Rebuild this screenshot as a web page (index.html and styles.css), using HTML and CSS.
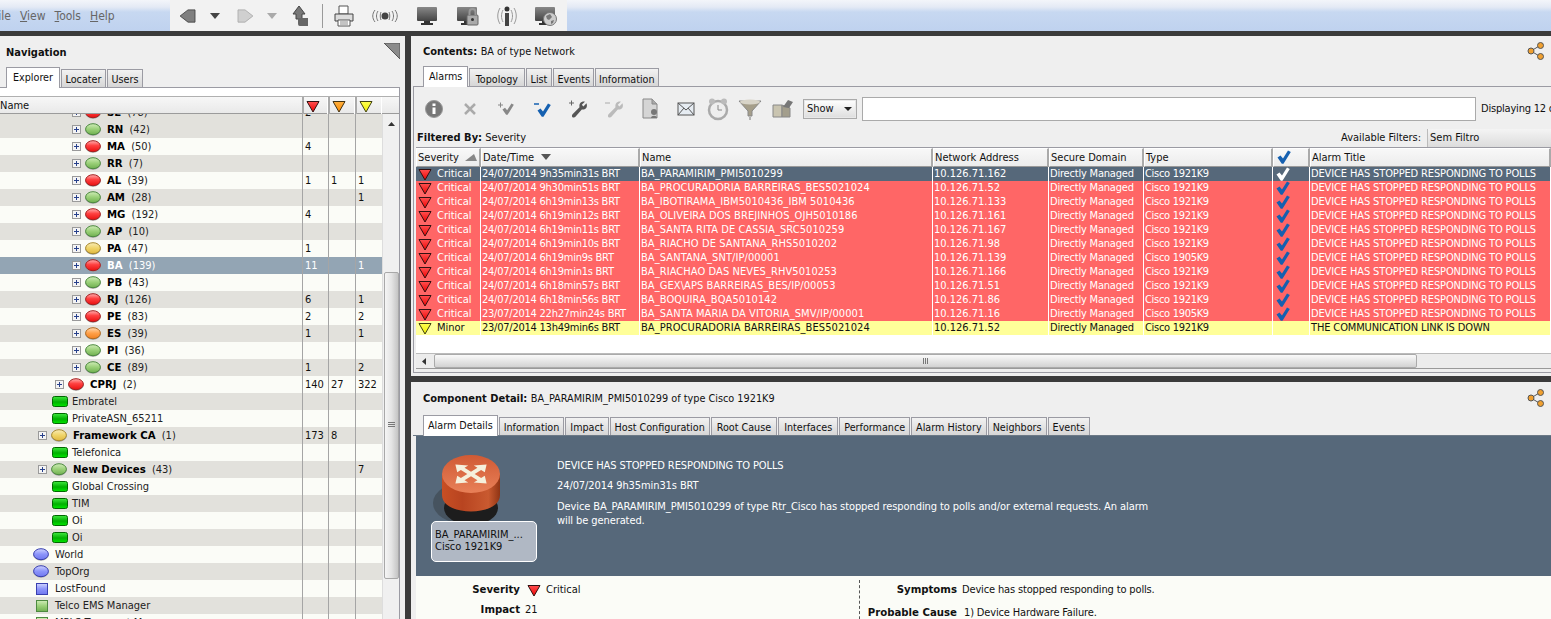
FILE: index.html
```html
<!DOCTYPE html>
<html lang="en">
<head>
<meta charset="utf-8">
<title>Network Console</title>
<link rel="stylesheet" href="styles.css">
</head>
<body>
<svg class="defs" width="0" height="0" aria-hidden="true">
  <defs>
    <linearGradient id="gRed" x1="0" y1="0" x2="0" y2="1"><stop offset="0" stop-color="#ffb0b0"/><stop offset=".45" stop-color="#ff4040"/><stop offset="1" stop-color="#e81010"/></linearGradient>
    <linearGradient id="gGreen" x1="0" y1="0" x2="0" y2="1"><stop offset="0" stop-color="#d0ecb8"/><stop offset=".5" stop-color="#9ad078"/><stop offset="1" stop-color="#70b050"/></linearGradient>
    <linearGradient id="gYellow" x1="0" y1="0" x2="0" y2="1"><stop offset="0" stop-color="#f8ecb8"/><stop offset=".5" stop-color="#f0d468"/><stop offset="1" stop-color="#e0b840"/></linearGradient>
    <linearGradient id="gOrange" x1="0" y1="0" x2="0" y2="1"><stop offset="0" stop-color="#ffd8b0"/><stop offset=".5" stop-color="#ffa048"/><stop offset="1" stop-color="#f08020"/></linearGradient>
    <linearGradient id="gBlue" x1="0" y1="0" x2="0" y2="1"><stop offset="0" stop-color="#d0d4ff"/><stop offset=".5" stop-color="#8c94fa"/><stop offset="1" stop-color="#7078f0"/></linearGradient>
    <linearGradient id="gRect" x1="0" y1="0" x2="0" y2="1"><stop offset="0" stop-color="#40e840"/><stop offset=".55" stop-color="#00b000"/><stop offset="1" stop-color="#00e800"/></linearGradient>
    <linearGradient id="gTriRed" x1="0" y1="0" x2="0" y2="1"><stop offset="0" stop-color="#ff5050"/><stop offset="1" stop-color="#f00000"/></linearGradient>
    <linearGradient id="gTriOr" x1="0" y1="0" x2="0" y2="1"><stop offset="0" stop-color="#ffb040"/><stop offset="1" stop-color="#ff8c00"/></linearGradient>
    <linearGradient id="gTriYe" x1="0" y1="0" x2="0" y2="1"><stop offset="0" stop-color="#ffff50"/><stop offset="1" stop-color="#f0f000"/></linearGradient>
    <linearGradient id="gBody" x1="0" y1="0" x2="1" y2="0"><stop offset="0" stop-color="#c84f24"/><stop offset=".35" stop-color="#b84420"/><stop offset=".8" stop-color="#c95a30"/><stop offset="1" stop-color="#8f3414"/></linearGradient>
    <linearGradient id="gTop" x1="0" y1="0" x2="0" y2="1"><stop offset="0" stop-color="#d05a34"/><stop offset="1" stop-color="#e88058"/></linearGradient>
    <linearGradient id="gMon" x1="0" y1="0" x2="0" y2="1"><stop offset="0" stop-color="#888"/><stop offset="1" stop-color="#444"/></linearGradient>
    <symbol id="ovRed" viewBox="0 0 16 13"><ellipse cx="8" cy="7.200" rx="7.600" ry="5.500" fill="#999"/><ellipse cx="8" cy="6.200" rx="7.400" ry="5.500" fill="url(#gRed)" stroke="#a52020"/></symbol>
    <symbol id="ovGreen" viewBox="0 0 16 13"><ellipse cx="8" cy="7.200" rx="7.600" ry="5.500" fill="#999"/><ellipse cx="8" cy="6.200" rx="7.400" ry="5.500" fill="url(#gGreen)" stroke="#4d8a40"/></symbol>
    <symbol id="ovYellow" viewBox="0 0 16 13"><ellipse cx="8" cy="7.200" rx="7.600" ry="5.500" fill="#999"/><ellipse cx="8" cy="6.200" rx="7.400" ry="5.500" fill="url(#gYellow)" stroke="#a88a30"/></symbol>
    <symbol id="ovOrange" viewBox="0 0 16 13"><ellipse cx="8" cy="7.200" rx="7.600" ry="5.500" fill="#999"/><ellipse cx="8" cy="6.200" rx="7.400" ry="5.500" fill="url(#gOrange)" stroke="#b06a20"/></symbol>
    <symbol id="ovBlue" viewBox="0 0 16 13"><ellipse cx="8" cy="7.200" rx="7.600" ry="5.500" fill="#aaa"/><ellipse cx="8" cy="6.200" rx="7.400" ry="5.500" fill="url(#gBlue)" stroke="#3a40b0"/></symbol>
    <symbol id="rcGreen" viewBox="0 0 16 11"><rect x=".5" y=".5" width="15" height="10" rx="2" fill="url(#gRect)" stroke="#006800"/></symbol>
    <symbol id="sqBlue" viewBox="0 0 12 12"><rect x=".5" y=".5" width="11" height="11" fill="url(#gBlue)" stroke="#3a40b0"/></symbol>
    <symbol id="sqGreen" viewBox="0 0 12 12"><rect x=".5" y=".5" width="11" height="11" fill="url(#gGreen)" stroke="#4d8a40"/></symbol>
    <symbol id="triRed" viewBox="0 0 14 13"><path d="M1 1.500H13L7 12Z" fill="url(#gTriRed)" stroke="#301010" stroke-linejoin="round"/></symbol>
    <symbol id="triOr" viewBox="0 0 14 13"><path d="M1 1.500H13L7 12Z" fill="url(#gTriOr)" stroke="#403010" stroke-linejoin="round"/></symbol>
    <symbol id="triYe" viewBox="0 0 14 13"><path d="M1 1.500H13L7 12Z" fill="url(#gTriYe)" stroke="#404010" stroke-linejoin="round"/></symbol>
    <symbol id="tick" viewBox="0 0 14 14"><path d="M0.500 7.500L3.500 5.500 6 8.500 11 0.500 13.800 2 6.500 13.800H4.800Z" fill="currentColor"/></symbol>
    <symbol id="plus" viewBox="0 0 9 9"><rect x=".5" y=".5" width="8" height="8" fill="#f4f4f4" stroke="#9a9a9a"/><path d="M2 4.500H7M4.500 2V7" stroke="#27408b"/></symbol>
    <symbol id="share" viewBox="0 0 18 18"><path d="M4 9L13 3.500M4 9L13 14.500" stroke="#555" fill="none"/><circle cx="4" cy="9" r="3" fill="#f0a030" stroke="#555"/><circle cx="13.500" cy="3.500" r="3" fill="#f0a030" stroke="#555"/><circle cx="13.500" cy="14.500" r="3" fill="#f0a030" stroke="#555"/></symbol>
    <symbol id="wrench" viewBox="0 0 22 22"><path d="M20 3L16 7 14 5 18 1C14 0 10 3 11 8L2 17C1 18 1 20 2 21 3 22 5 21 6 20L14 11C19 12 22 8 20 3Z" fill="currentColor"/></symbol>
    <symbol id="mon" viewBox="0 0 24 22"><rect x="2" y="2" width="20" height="14" rx="1" fill="url(#gMon)"/><path d="M9 16H15V18H18V20H6V18H9Z" fill="#333"/></symbol>
  </defs>
</svg>

<header class="topbar">
  <nav class="menu">
    <span class="menu-file">File</span>
    <span><u>V</u>iew</span>
    <span><u>T</u>ools</span>
    <span><u>H</u>elp</span>
  </nav>
  <div class="apptools">
    <svg class="ti" viewBox="0 0 20 16"><path d="M1 8L10 1H18V15H10Z" fill="#7f7f7f" stroke="#444"/></svg>
    <svg class="dd" viewBox="0 0 10 6"><path d="M0 0H10L5 6Z" fill="#444"/></svg>
    <svg class="ti" viewBox="0 0 20 16"><path d="M19 8L10 1H2V15H10Z" fill="#d0d0d0" stroke="#aaa"/></svg>
    <svg class="dd" viewBox="0 0 10 6"><path d="M0 0H10L5 6Z" fill="#aaa"/></svg>
    <svg class="ti tall" viewBox="0 0 18 22"><path d="M8 1L14 9H11V14H5V9H2Z" fill="#777" stroke="#444"/><path d="M7 13H17V21H9C7 21 7 19 7 18Z" fill="#666"/></svg>
    <i class="sep"></i>
    <svg class="ti tall" viewBox="0 0 20 22"><path d="M5 1H14V9H5Z" fill="#fff" stroke="#555"/><path d="M1 9H19V16H1Z" fill="#ddd" stroke="#444"/><path d="M4 15H16V21H4Z" fill="#fff" stroke="#555"/><path d="M6 17H14M6 19H14" stroke="#888"/></svg>
    <svg class="wide" viewBox="0 0 30 16"><g fill="none" stroke="#777"><path d="M5 2C2 6 2 10 5 14M8 3C6 6 6 10 8 13M11 4C10 6 10 10 11 12M25 2C28 6 28 10 25 14M22 3C24 6 24 10 22 13M19 4C20 6 20 10 19 12"/></g><circle cx="15" cy="8" r="3.500" fill="#444"/></svg>
    <svg class="ti big" viewBox="0 0 24 22"><use href="#mon"/></svg>
    <svg class="ti big" viewBox="0 0 24 22"><use href="#mon"/><rect x="12" y="10" width="11" height="10" rx="1" fill="#aaa" stroke="#666"/><path d="M14.500 10V7C14.500 3 20.500 3 20.500 7V10" fill="none" stroke="#999" stroke-width="2"/><circle cx="17.500" cy="14.500" r="1.500" fill="#333"/></svg>
    <svg class="ti big" viewBox="0 0 24 22"><g fill="none" stroke="#999"><path d="M5 3C2 8 2 14 5 19M8 5C6 9 6 13 8 17M19 3C22 8 22 14 19 19M16 5C18 9 18 13 16 17"/></g><circle cx="12" cy="4" r="2.500" fill="#333"/><path d="M10 8H14V21H10Z" fill="#444"/></svg>
    <svg class="ti big" viewBox="0 0 24 22"><use href="#mon"/><circle cx="17" cy="14" r="6.500" fill="#ccc" stroke="#777"/><path d="M13 11L17 9 19 12 16 15 14 14ZM18 16L21 15 20 18 18 19Z" fill="#777"/></svg>
  </div>
  <div class="menu-rest"></div>
</header>

<main class="workspace">
  <section class="nav-panel">
    <div class="panel-head">
      <h2 class="panel-title">Navigation</h2>
      <svg class="collapse" viewBox="0 0 16 16"><path d="M0 0H16V16Z" fill="#8b8b8b" stroke="#555"/></svg>
    </div>
    <div class="tabs nav-tabs">
      <span class="tab active tab-explorer">Explorer</span>
      <span class="tab tab-locater">Locater</span>
      <span class="tab tab-users">Users</span>
    </div>
    <div class="nav-body">
      <div class="tree-head">
        <div class="th-name">Name</div>
        <div class="th-sev"><svg class="tri"><use href="#triRed"/></svg></div>
        <div class="th-sev"><svg class="tri"><use href="#triOr"/></svg></div>
        <div class="th-sev"><svg class="tri"><use href="#triYe"/></svg></div>
      </div>
      <div class="tree-wrap">
        <div class="tree">
          <div class="row first even"><div class="nm l3"><svg class="pl"><use href="#plus"/></svg><svg class="ov"><use href="#ovRed"/></svg><b>SE</b> (78)</div><div class="n">2</div><div class="n"></div><div class="n"></div></div>
          <div class="row even"><div class="nm l3"><svg class="pl"><use href="#plus"/></svg><svg class="ov"><use href="#ovGreen"/></svg><b>RN</b> (42)</div><div class="n"></div><div class="n"></div><div class="n"></div></div>
          <div class="row"><div class="nm l3"><svg class="pl"><use href="#plus"/></svg><svg class="ov"><use href="#ovRed"/></svg><b>MA</b> (50)</div><div class="n">4</div><div class="n"></div><div class="n"></div></div>
          <div class="row even"><div class="nm l3"><svg class="pl"><use href="#plus"/></svg><svg class="ov"><use href="#ovGreen"/></svg><b>RR</b> (7)</div><div class="n"></div><div class="n"></div><div class="n"></div></div>
          <div class="row"><div class="nm l3"><svg class="pl"><use href="#plus"/></svg><svg class="ov"><use href="#ovRed"/></svg><b>AL</b> (39)</div><div class="n">1</div><div class="n">1</div><div class="n">1</div></div>
          <div class="row even"><div class="nm l3"><svg class="pl"><use href="#plus"/></svg><svg class="ov"><use href="#ovGreen"/></svg><b>AM</b> (28)</div><div class="n"></div><div class="n"></div><div class="n">1</div></div>
          <div class="row"><div class="nm l3"><svg class="pl"><use href="#plus"/></svg><svg class="ov"><use href="#ovRed"/></svg><b>MG</b> (192)</div><div class="n">4</div><div class="n"></div><div class="n"></div></div>
          <div class="row even"><div class="nm l3"><svg class="pl"><use href="#plus"/></svg><svg class="ov"><use href="#ovGreen"/></svg><b>AP</b> (10)</div><div class="n"></div><div class="n"></div><div class="n"></div></div>
          <div class="row"><div class="nm l3"><svg class="pl"><use href="#plus"/></svg><svg class="ov"><use href="#ovYellow"/></svg><b>PA</b> (47)</div><div class="n">1</div><div class="n"></div><div class="n"></div></div>
          <div class="row sel"><div class="nm l3"><svg class="pl"><use href="#plus"/></svg><svg class="ov"><use href="#ovRed"/></svg><b>BA</b> (139)</div><div class="n">11</div><div class="n"></div><div class="n">1</div></div>
          <div class="row"><div class="nm l3"><svg class="pl"><use href="#plus"/></svg><svg class="ov"><use href="#ovGreen"/></svg><b>PB</b> (43)</div><div class="n"></div><div class="n"></div><div class="n"></div></div>
          <div class="row even"><div class="nm l3"><svg class="pl"><use href="#plus"/></svg><svg class="ov"><use href="#ovRed"/></svg><b>RJ</b> (126)</div><div class="n">6</div><div class="n"></div><div class="n">1</div></div>
          <div class="row"><div class="nm l3"><svg class="pl"><use href="#plus"/></svg><svg class="ov"><use href="#ovRed"/></svg><b>PE</b> (83)</div><div class="n">2</div><div class="n"></div><div class="n">2</div></div>
          <div class="row even"><div class="nm l3"><svg class="pl"><use href="#plus"/></svg><svg class="ov"><use href="#ovOrange"/></svg><b>ES</b> (39)</div><div class="n">1</div><div class="n"></div><div class="n">1</div></div>
          <div class="row"><div class="nm l3"><svg class="pl"><use href="#plus"/></svg><svg class="ov"><use href="#ovGreen"/></svg><b>PI</b> (36)</div><div class="n"></div><div class="n"></div><div class="n"></div></div>
          <div class="row even"><div class="nm l3"><svg class="pl"><use href="#plus"/></svg><svg class="ov"><use href="#ovGreen"/></svg><b>CE</b> (89)</div><div class="n">1</div><div class="n"></div><div class="n">2</div></div>
          <div class="row"><div class="nm l2"><svg class="pl"><use href="#plus"/></svg><svg class="ov"><use href="#ovRed"/></svg><b>CPRJ</b> (2)</div><div class="n">140</div><div class="n">27</div><div class="n">322</div></div>
          <div class="row even"><div class="nm l1b"><svg class="rc"><use href="#rcGreen"/></svg>Embratel</div><div class="n"></div><div class="n"></div><div class="n"></div></div>
          <div class="row"><div class="nm l1b"><svg class="rc"><use href="#rcGreen"/></svg>PrivateASN_65211</div><div class="n"></div><div class="n"></div><div class="n"></div></div>
          <div class="row even"><div class="nm l1"><svg class="pl"><use href="#plus"/></svg><svg class="ov"><use href="#ovYellow"/></svg><b>Framework CA</b> (1)</div><div class="n">173</div><div class="n">8</div><div class="n"></div></div>
          <div class="row"><div class="nm l1b"><svg class="rc"><use href="#rcGreen"/></svg>Telefonica</div><div class="n"></div><div class="n"></div><div class="n"></div></div>
          <div class="row even"><div class="nm l1"><svg class="pl"><use href="#plus"/></svg><svg class="ov"><use href="#ovGreen"/></svg><b>New Devices</b> (43)</div><div class="n"></div><div class="n"></div><div class="n">7</div></div>
          <div class="row"><div class="nm l1b"><svg class="rc"><use href="#rcGreen"/></svg>Global Crossing</div><div class="n"></div><div class="n"></div><div class="n"></div></div>
          <div class="row even"><div class="nm l1b"><svg class="rc"><use href="#rcGreen"/></svg>TIM</div><div class="n"></div><div class="n"></div><div class="n"></div></div>
          <div class="row"><div class="nm l1b"><svg class="rc"><use href="#rcGreen"/></svg>Oi</div><div class="n"></div><div class="n"></div><div class="n"></div></div>
          <div class="row even"><div class="nm l1b"><svg class="rc"><use href="#rcGreen"/></svg>Oi</div><div class="n"></div><div class="n"></div><div class="n"></div></div>
          <div class="row"><div class="nm l0"><svg class="ov"><use href="#ovBlue"/></svg>World</div><div class="n"></div><div class="n"></div><div class="n"></div></div>
          <div class="row even"><div class="nm l0"><svg class="ov"><use href="#ovBlue"/></svg>TopOrg</div><div class="n"></div><div class="n"></div><div class="n"></div></div>
          <div class="row"><div class="nm l0s"><svg class="sq"><use href="#sqBlue"/></svg>LostFound</div><div class="n"></div><div class="n"></div><div class="n"></div></div>
          <div class="row even"><div class="nm l0s"><svg class="sq"><use href="#sqGreen"/></svg>Telco EMS Manager</div><div class="n"></div><div class="n"></div><div class="n"></div></div>
          <div class="row"><div class="nm l0s"><svg class="sq"><use href="#sqGreen"/></svg>MPLS Transport M</div><div class="n"></div><div class="n"></div><div class="n"></div></div>
        </div>
        <div class="vscroll">
          <svg class="arrow-up" viewBox="0 0 7 4"><path d="M0 4L3.500 0 7 4Z" fill="#333"/></svg>
          <div class="vthumb"><i></i><i></i><i></i></div>
        </div>
      </div>
    </div>
  </section>

  <div class="right-col">
    <section class="contents">
      <div class="panel-head right-head">
        <h2 class="panel-title"><span class="pt-b">Contents:</span> <span class="pt-n">BA of type Network</span></h2>
        <svg class="share"><use href="#share"/></svg>
      </div>
      <div class="tabs right-tabs">
        <span class="tab active">Alarms</span>
        <span class="tab">Topology</span>
        <span class="tab">List</span>
        <span class="tab">Events</span>
        <span class="tab">Information</span>
      </div>
      <div class="tab-frame">
        <div class="alarm-tools">
          <svg class="ai" viewBox="0 0 24 24"><circle cx="12" cy="12" r="8.500" fill="#777" stroke="#999"/><rect x="10.500" y="10.500" width="3" height="6.500" fill="#fff"/><rect x="10.500" y="6.500" width="3" height="2.500" fill="#fff"/></svg>
          <svg class="ai" viewBox="0 0 24 24"><path d="M7 7L17 17M17 7L7 17" stroke="#aaa" stroke-width="2.500"/></svg>
          <svg class="ai grey" viewBox="0 0 24 24"><path d="M4 8H9M6.500 5.500V10.500" stroke="#888"/><use href="#tick" x="8" y="6" width="12" height="12"/></svg>
          <svg class="ai blue" viewBox="0 0 24 24"><path d="M4 7H9" stroke="#1560b0" stroke-width="1.500"/><use href="#tick" x="7" y="6" width="14" height="14"/></svg>
          <svg class="ai dark" viewBox="0 0 24 24"><path d="M3 6H8M5.500 3.500V8.500" stroke="#666"/><use href="#wrench" x="5" y="4" width="17" height="17"/></svg>
          <svg class="ai light" viewBox="0 0 24 24"><path d="M3 6H8" stroke="#aaa"/><use href="#wrench" x="5" y="4" width="17" height="17"/></svg>
          <svg class="ai" viewBox="0 0 24 24"><path d="M5 2H14L19 7V21H5Z" fill="#d5d5d5" stroke="#888"/><path d="M14 2V7H19" fill="#aaa" stroke="#888"/><circle cx="16" cy="15" r="3" fill="#777"/><path d="M13 21C13 18 19 18 19 21Z" fill="#777"/></svg>
          <svg class="ai" viewBox="0 0 24 24"><rect x="4" y="6" width="16" height="12" fill="#e6ecf2" stroke="#555"/><path d="M4 6L12 13 20 6M4 18L10 11M20 18L14 11" fill="none" stroke="#555"/></svg>
          <svg class="ai tight" viewBox="0 0 24 24"><circle cx="12" cy="13" r="9" fill="#eee" stroke="#aaa" stroke-width="2.500"/><circle cx="6" cy="4.500" r="3" fill="#bbb"/><circle cx="18" cy="4.500" r="3" fill="#bbb"/><path d="M12 8V13H16" fill="none" stroke="#888"/></svg>
          <svg class="ai tight" viewBox="0 0 24 24"><path d="M1 4H23L14 14V19H10V14Z" fill="#a59e8a" stroke="#888"/><ellipse cx="12" cy="5" rx="10" ry="2.500" fill="#d8d4c8"/><path d="M12 20V23" stroke="#777"/></svg>
          <svg class="ai tight" viewBox="0 0 24 24"><path d="M3 8H12V20H3Z" fill="#c9c4b0" stroke="#888"/><path d="M12 8L20 11V20H12Z" fill="#a39e8c" stroke="#888"/><path d="M13 10L18 3 23 5 19 11Z" fill="#777"/></svg>
          <div class="combo show-combo"><span>Show</span><svg viewBox="0 0 8 4"><path d="M0 0H8L4 4Z" fill="#222"/></svg></div>
          <div class="search-box"></div>
          <span class="displaying">Displaying 12 of 12</span>
        </div>
        <div class="filter-row">
          <span><b>Filtered By:</b> Severity</span>
          <span class="avail">Available Filters:</span>
          <div class="sem">Sem Filtro</div>
        </div>
        <div class="a-head a-grid">
          <div>Severity <svg class="sort" viewBox="0 0 12 7"><path d="M0 7L9 0 12 7Z" fill="#888"/></svg></div>
          <div>Date/Time <svg class="sort" viewBox="0 0 12 7"><path d="M1 0H11L6 6Z" fill="#555"/></svg></div>
          <div>Name</div>
          <div>Network Address</div>
          <div>Secure Domain</div>
          <div>Type</div>
          <div class="ck"><svg class="hcheck"><use href="#tick"/></svg></div>
          <div>Alarm Title</div>
        </div>
        <div class="a-body">
          <div class="a-row a-grid act"><div><svg class="tri"><use href="#triRed"/></svg>Critical</div><div>24/07/2014 9h35min31s BRT</div><div>BA_PARAMIRIM_PMI5010299</div><div>10.126.71.162</div><div>Directly Managed</div><div>Cisco 1921K9</div><div class="ck"><svg class="check"><use href="#tick"/></svg></div><div>DEVICE HAS STOPPED RESPONDING TO POLLS</div></div>
          <div class="a-row a-grid crit"><div><svg class="tri"><use href="#triRed"/></svg>Critical</div><div>24/07/2014 9h30min51s BRT</div><div>BA_PROCURADORIA BARREIRAS_BES5021024</div><div>10.126.71.52</div><div>Directly Managed</div><div>Cisco 1921K9</div><div class="ck"><svg class="check"><use href="#tick"/></svg></div><div>DEVICE HAS STOPPED RESPONDING TO POLLS</div></div>
          <div class="a-row a-grid crit"><div><svg class="tri"><use href="#triRed"/></svg>Critical</div><div>24/07/2014 6h19min13s BRT</div><div>BA_IBOTIRAMA_IBM5010436_IBM 5010436</div><div>10.126.71.133</div><div>Directly Managed</div><div>Cisco 1921K9</div><div class="ck"><svg class="check"><use href="#tick"/></svg></div><div>DEVICE HAS STOPPED RESPONDING TO POLLS</div></div>
          <div class="a-row a-grid crit"><div><svg class="tri"><use href="#triRed"/></svg>Critical</div><div>24/07/2014 6h19min12s BRT</div><div>BA_OLIVEIRA DOS BREJINHOS_OJH5010186</div><div>10.126.71.161</div><div>Directly Managed</div><div>Cisco 1921K9</div><div class="ck"><svg class="check"><use href="#tick"/></svg></div><div>DEVICE HAS STOPPED RESPONDING TO POLLS</div></div>
          <div class="a-row a-grid crit"><div><svg class="tri"><use href="#triRed"/></svg>Critical</div><div>24/07/2014 6h19min11s BRT</div><div>BA_SANTA RITA DE CASSIA_SRC5010259</div><div>10.126.71.167</div><div>Directly Managed</div><div>Cisco 1921K9</div><div class="ck"><svg class="check"><use href="#tick"/></svg></div><div>DEVICE HAS STOPPED RESPONDING TO POLLS</div></div>
          <div class="a-row a-grid crit"><div><svg class="tri"><use href="#triRed"/></svg>Critical</div><div>24/07/2014 6h19min10s BRT</div><div>BA_RIACHO DE SANTANA_RHS5010202</div><div>10.126.71.98</div><div>Directly Managed</div><div>Cisco 1921K9</div><div class="ck"><svg class="check"><use href="#tick"/></svg></div><div>DEVICE HAS STOPPED RESPONDING TO POLLS</div></div>
          <div class="a-row a-grid crit"><div><svg class="tri"><use href="#triRed"/></svg>Critical</div><div>24/07/2014 6h19min9s BRT</div><div>BA_SANTANA_SNT/IP/00001</div><div>10.126.71.139</div><div>Directly Managed</div><div>Cisco 1905K9</div><div class="ck"><svg class="check"><use href="#tick"/></svg></div><div>DEVICE HAS STOPPED RESPONDING TO POLLS</div></div>
          <div class="a-row a-grid crit"><div><svg class="tri"><use href="#triRed"/></svg>Critical</div><div>24/07/2014 6h19min1s BRT</div><div>BA_RIACHAO DAS NEVES_RHV5010253</div><div>10.126.71.166</div><div>Directly Managed</div><div>Cisco 1921K9</div><div class="ck"><svg class="check"><use href="#tick"/></svg></div><div>DEVICE HAS STOPPED RESPONDING TO POLLS</div></div>
          <div class="a-row a-grid crit"><div><svg class="tri"><use href="#triRed"/></svg>Critical</div><div>24/07/2014 6h18min57s BRT</div><div>BA_GEX\APS BARREIRAS_BES/IP/00053</div><div>10.126.71.51</div><div>Directly Managed</div><div>Cisco 1921K9</div><div class="ck"><svg class="check"><use href="#tick"/></svg></div><div>DEVICE HAS STOPPED RESPONDING TO POLLS</div></div>
          <div class="a-row a-grid crit"><div><svg class="tri"><use href="#triRed"/></svg>Critical</div><div>24/07/2014 6h18min56s BRT</div><div>BA_BOQUIRA_BQA5010142</div><div>10.126.71.86</div><div>Directly Managed</div><div>Cisco 1921K9</div><div class="ck"><svg class="check"><use href="#tick"/></svg></div><div>DEVICE HAS STOPPED RESPONDING TO POLLS</div></div>
          <div class="a-row a-grid crit"><div><svg class="tri"><use href="#triRed"/></svg>Critical</div><div>23/07/2014 22h27min24s BRT</div><div>BA_SANTA MARIA DA VITORIA_SMV/IP/00001</div><div>10.126.71.16</div><div>Directly Managed</div><div>Cisco 1905K9</div><div class="ck"><svg class="check"><use href="#tick"/></svg></div><div>DEVICE HAS STOPPED RESPONDING TO POLLS</div></div>
          <div class="a-row a-grid minor"><div><svg class="tri"><use href="#triYe"/></svg>Minor</div><div>23/07/2014 13h49min6s BRT</div><div>BA_PROCURADORIA BARREIRAS_BES5021024</div><div>10.126.71.52</div><div>Directly Managed</div><div>Cisco 1921K9</div><div class="ck"></div><div>THE COMMUNICATION LINK IS DOWN</div></div>
        </div>
        <div class="hscroll">
          <svg class="arrow-left" viewBox="0 0 4 7"><path d="M4 0L0 3.500 4 7Z" fill="#333"/></svg>
          <div class="hthumb"><i></i><i></i><i></i></div>
        </div>
      </div>
    </section>

    <section class="detail">
      <div class="panel-head detail-head">
        <h2 class="panel-title"><span class="pt-b">Component Detail:</span> <span class="pt-n">BA_PARAMIRIM_PMI5010299 of type Cisco 1921K9</span></h2>
        <svg class="share"><use href="#share"/></svg>
      </div>
      <div class="tabs detail-tabs">
        <span class="tab active">Alarm Details</span>
        <span class="tab">Information</span>
        <span class="tab">Impact</span>
        <span class="tab">Host Configuration</span>
        <span class="tab tab-wider">Root Cause</span>
        <span class="tab tab-wider">Interfaces</span>
        <span class="tab">Performance</span>
        <span class="tab">Alarm History</span>
        <span class="tab">Neighbors</span>
        <span class="tab">Events</span>
      </div>
      <div class="detail-frame">
        <div class="banner">
          <div class="device">
            <svg class="router" viewBox="0 0 72 72">
              <ellipse cx="32" cy="50" rx="32" ry="21" fill="#46535f"/>
              <ellipse cx="38" cy="55" rx="27" ry="17" fill="#1d1d1d"/>
              <path d="M9 21V42C9 64 67 64 67 42V21Z" fill="url(#gBody)"/>
              <ellipse cx="38" cy="21" rx="29" ry="19" fill="url(#gTop)"/>
              <path transform="translate(38 21) scale(1.3 .8) rotate(45)" d="M-2-2V-9H-6L0-17 6-9H2V-2H9V-6L17 0 9 6V2H2V9H6L0 17-6 9H-2V2H-9V6L-17 0-9-6V-2Z" fill="#f5f0dc"/>
            </svg>
            <div class="device-card">
              <div>BA_PARAMIRIM_...</div>
              <div>Cisco 1921K9</div>
            </div>
          </div>
          <div class="banner-text">
            <p class="b1">DEVICE HAS STOPPED RESPONDING TO POLLS</p>
            <p class="b2">24/07/2014 9h35min31s BRT</p>
            <p class="b3">Device BA_PARAMIRIM_PMI5010299 of type Rtr_Cisco has stopped responding to polls and/or external requests. An alarm will be generated.</p>
          </div>
        </div>
        <div class="props">
          <div class="props-left">
            <div class="prop"><b>Severity</b><span><svg class="tri"><use href="#triRed"/></svg>Critical</span></div>
            <div class="prop"><b>Impact</b><span>21</span></div>
          </div>
          <div class="props-right">
            <div class="prop"><b>Symptoms</b><span>Device has stopped responding to polls.</span></div>
            <div class="prop"><b>Probable Cause</b><span>1) Device Hardware Failure.</span></div>
          </div>
        </div>
      </div>
    </section>
  </div>
</main>
</body>
</html>
```
FILE: styles.css
```css
* { box-sizing: border-box; }
html, body { margin: 0; height: 100%; overflow: hidden; }
body {
  width: 1551px; height: 619px;
  background: #3b3b3b;
  font: 11px/14px "DejaVu Sans Condensed", "Liberation Sans", sans-serif;
  color: #111;
  display: flex; flex-direction: column;
}
.defs { position: absolute; }

.topbar {
  height: 31px; flex: none; display: flex;
  background: linear-gradient(#f3f5fa 0, #e4eaf5 7px, #c7d8f1 12px, #bfd2ef 31px);
}
.menu { width: 177px; flex: none; display: flex; gap: 9px; padding-top: 9px; margin-left: -7px; color: #666; font-size: 12px; }
.menu-rest { flex: 1; }
.apptools {
  width: 397px; flex: none; background: #f2f2f2; display: grid; align-items: center; justify-items: center;
  grid-template-columns: 36px 18px 42px 12px 44px 1px 41px 42px 42px 38px 42px 34px 5px;
}
.ti { width: 18px; height: 14px; }
.ti.tall { width: 20px; height: 22px; }
.ti.big { width: 24px; height: 22px; }
.dd { width: 10px; height: 6px; }
.wide { width: 30px; height: 16px; }
.sep { width: 1px; height: 24px; background: #9a9a9a; }

.workspace { flex: 1; display: flex; gap: 6px; min-height: 0; padding-top: 5px; }

.nav-panel { width: 405px; flex: none; background: #efefef; display: flex; flex-direction: column; padding-right: 5px; }
.panel-head { height: 30px; flex: none; display: flex; justify-content: space-between; align-items: center; }
.nav-panel .panel-head { padding: 2px 0 0 6px; margin-right: -5px; }
.panel-title { margin: 0; padding-top: 2px; font-size: 11px; font-weight: bold; line-height: 14px; }
.pt-n { font-weight: normal; font-size: 10.8px; }
.collapse { width: 16px; height: 16px; margin: 0 5px 3px 0; }

.tabs { display: flex; height: 21px; flex: none; align-items: flex-end; position: relative; z-index: 1; gap: 1px; }
.tab {
  height: 18px; padding: 2px 4px 0; border: 1px solid #9b9ba3; border-bottom: 0; font-size: 10.7px;
  background: linear-gradient(#f2f2f2, #d6d6d6); white-space: nowrap; line-height: 15px; text-align: center;
}
.tab.active { height: 21px; background: #fff; padding: 3px 4px 0; margin-bottom: -1px; line-height: 14px; }
.tab.tab-wider { padding: 2px 5px 0; }
.nav-tabs { padding-left: 6px; }
.tab-explorer { width: 54px; padding-left: 0; padding-right: 0; }
.tab-locater { width: 45px; padding-left: 0; padding-right: 0; }
.tab-users { width: 36px; padding-left: 0; padding-right: 0; }

.nav-body { flex: 1; min-height: 0; display: flex; flex-direction: column; border-top: 1px solid #9b9ba3; padding-top: 8px; background: #fff; border-right: 1px solid #9b9ba3; }
.tree-head {
  height: 18px; flex: none; display: grid; grid-template-columns: 302px 26px 27px 27px 17px;
  background: linear-gradient(#f7f7f7, #e9e9e9); border-top: 1px solid #b0b0b0; border-bottom: 1px solid #9b9b9b;
}
.th-name { line-height: 18px; }
.th-sev { border-left: 2px solid #aaa; border-right: 1px solid #fff; display: flex; justify-content: flex-start; align-items: center; padding-left: 2px; }
.tri { width: 14px; height: 13px; flex: none; vertical-align: middle; }

.tree-wrap { flex: 1; min-height: 0; display: flex; overflow: hidden; }
.tree { width: 382px; flex: none; }
.row { height: 17px; display: grid; grid-template-columns: 302px 26px 27px 27px; background: #fbfcf7; }
.row.first { margin-top: -10px; }
.row.even { background: #e2e1dc; }
.row.sel { background: #93a5b4; color: #fff; }
.nm { display: flex; align-items: center; white-space: pre; font-size: 11px; color: #222; }
.sel .nm { color: #fff; }
.nm b { color: #000; margin-right: 3px; font-size: 11.3px; }
.sel .nm b { color: #fff; }
.n { border-left: 1px solid #a5a5a5; padding: 2px 0 0 2px; font-size: 11px; }
.pl { width: 9px; height: 9px; flex: none; margin-right: 4px; }
.ov { width: 16px; height: 13px; flex: none; margin-right: 6px; }
.rc { width: 16px; height: 11px; flex: none; margin-right: 4px; }
.sq { width: 12px; height: 12px; flex: none; margin-right: 7px; }
.l3 { padding-left: 72px; }
.l2 { padding-left: 55px; }
.l1 { padding-left: 38px; }
.l1b { padding-left: 52px; }
.l0 { padding-left: 33px; }
.l0s { padding-left: 36px; }

.vscroll { width: 17px; flex: none; background: #f0f0f0; border-left: 1px solid #ddd; display: flex; flex-direction: column; align-items: center; padding-top: 8px; }
.arrow-up { width: 7px; height: 4px; }
.vthumb {
  width: 15px; height: 307px; margin-top: 146px; flex: none; border: 1px solid #a8a8a8; border-radius: 2px;
  background: linear-gradient(90deg, #f5f5f5, #e4e4e4 50%, #c4c4c4);
  display: flex; flex-direction: column; align-items: center; gap: 1px; padding-top: 149px;
}
.vthumb i, .hthumb i { display: block; background: #777; }
.vthumb i { width: 7px; height: 1px; }

.right-col { flex: 1; min-width: 0; display: flex; flex-direction: column; gap: 6px; }
.contents { height: 340px; flex: none; background: #efefef; display: flex; flex-direction: column; padding-left: 2px; }
.right-head { padding: 0 0 0 10px; }
.share { width: 18px; height: 18px; margin-right: 6px; }
.right-tabs { height: 20px; padding-left: 10px; }
.right-tabs .tab { padding-top: 3px; }
.right-tabs .tab:nth-child(1) { padding-left: 5px; padding-right: 5px; }
.right-tabs .tab:nth-child(2) { padding-left: 5.5px; padding-right: 5.5px; }
.right-tabs .tab:nth-child(n+4) { padding-left: 3px; padding-right: 3px; }
.tab-frame { flex: 1; min-height: 0; border: 1px solid #9b9ba3; border-right: 0; margin-bottom: 3px; display: flex; flex-direction: column; padding: 0 0 3px 2px; }
.alarm-tools { height: 41px; flex: none; display: flex; align-items: center; gap: 12px; padding: 2px 0 0 6px; white-space: nowrap; }
.ai { width: 24px; height: 24px; flex: none; }
.ai.tight { margin-left: -4px; }
.grey { color: #888; } .blue { color: #1560b0; } .dark { color: #555; } .light { color: #bbb; }
.combo { background: linear-gradient(#fff, #ddd); border: 1px solid #aaa; }
.show-combo { width: 54px; height: 20px; margin-left: -3px; display: flex; align-items: center; justify-content: space-between; padding: 0 4px 0 3px; flex: none; box-shadow: inset 0 0 0 1px #e8e8e8; }
.show-combo svg { width: 8px; height: 4px; }
.search-box { width: 614px; height: 24px; background: #fff; border: 1px solid #aaa; margin-left: -7px; flex: none; }
.displaying { margin-left: -7px; letter-spacing: -.2px; }

.filter-row { height: 19px; flex: none; display: flex; align-items: center; padding-left: 1px; }
.filter-row b { font-size: 11px; }
.avail { margin-left: auto; letter-spacing: -.05px; }
.sem { width: 124px; height: 18px; margin-left: 6px; flex: none; padding: 2px 0 0 2px; background: linear-gradient(#f4f4f4, #dcdcdc); border-left: 1px solid #bbb; }

.a-grid { display: grid; grid-template-columns: 65px 159px 293px 116px 95px 129px 37px 1fr; }
.a-head { height: 20px; flex: none; border-top: 1px solid #9b9ba3; background: #fff; }
.a-head > div { background: linear-gradient(#f8f8f8, #ececec); border: 1px solid #fff; border-right: 2px solid #aaa; border-bottom: 1px solid #999; padding: 2px 0 0 1px; white-space: nowrap; }
.sort { width: 12px; height: 7px; margin-left: 3px; }
.hcheck { width: 14px; height: 14px; color: #1560b0; margin-top: -1px; }
.a-head .ck, .a-row .ck { display: flex; justify-content: flex-start; padding-left: 3px; }
.a-body { flex: 1; min-height: 0; background: #fff; }
.a-row { height: 14px; line-height: 14px; }
.a-row > div { white-space: nowrap; overflow: hidden; border-right: 1px solid #fff; padding-left: 1px; }
.a-row > div:first-child { padding-left: 2px; display: flex; align-items: center; gap: 5px; }
.a-row > div:nth-child(2) { letter-spacing: -.24px; }
.a-row > div:nth-child(3) { letter-spacing: .08px; }
.a-row > div:nth-child(5) { letter-spacing: -.2px; }
.a-row > div:nth-child(6) { letter-spacing: -.3px; }
.a-row > div:nth-child(8) { letter-spacing: -.13px; }
.act { background: #56687a; color: #fff; }
.crit { background: #ff6666; color: #fff; }
.minor { background: #ffff99; color: #111; }
.check { width: 14px; height: 14px; color: #1560b0; }
.act .check { color: #fff; }

.hscroll { height: 16px; flex: none; display: flex; align-items: center; background: #ececec; border-top: 1px solid #bbb; border-bottom: 1px solid #999; padding-left: 6px; }
.arrow-left { width: 4px; height: 7px; flex: none; }
.hthumb { width: 983px; height: 14px; margin-left: 8px; flex: none; background: linear-gradient(#fafafa, #d2d2d2); border: 1px solid #aaa; border-radius: 2px; display: flex; justify-content: center; align-items: center; gap: 1px; }
.hthumb i { width: 1px; height: 6px; }

.detail { flex: 1; min-height: 0; background: #efefef; display: flex; flex-direction: column; padding-left: 2px; overflow: hidden; }
.detail-head { padding-left: 10px; height: 32px; flex: none; }
.detail-tabs { padding-left: 10px; height: 21px; }
.detail-frame { flex: 1; min-height: 0; border-top: 1px solid #6c7986; padding-left: 3px; display: flex; flex-direction: column; }
.banner { height: 140px; flex: none; background: #56687a; display: flex; color: #fff; }
.device { width: 141px; padding: 17px 0 0 15px; flex: none; display: flex; flex-direction: column; }
.router { width: 72px; height: 72px; margin-left: 2px; flex: none; }
.device-card { width: 106px; height: 41px; margin-top: -4px; position: relative; background: #b0b8c4; border: 1px solid #fff; border-radius: 5px; color: #111; padding: 7px 0 0 3px; line-height: 12px; }
.banner-text { width: 596px; padding-top: 23px; letter-spacing: -.09px; }
.banner-text p { margin: 0; }
.banner-text .b2 { margin-top: 6px; }
.banner-text .b3 { margin-top: 7px; }
.props { flex: 1; min-height: 0; background: #fbfcf7; display: flex; padding-top: 4px; }
.props-left { width: 443px; flex: none; }
.props-right { flex: 1; border-left: 1px dashed #555; height: 60px; letter-spacing: -.15px; }
.prop { display: flex; height: 20px; align-items: center; white-space: nowrap; }
.prop b { font-size: 11.3px; text-align: right; letter-spacing: 0; }
.props-left .prop b { width: 104px; margin-right: 5px; }
.props-left .prop .tri { margin: 0 5px 0 2px; }
.props-right .prop b { width: 97px; margin-right: 5px; }
.props-right .prop + .prop { margin-top: 3px; }
.props-right .prop + .prop span { margin-left: 2px; }
```
